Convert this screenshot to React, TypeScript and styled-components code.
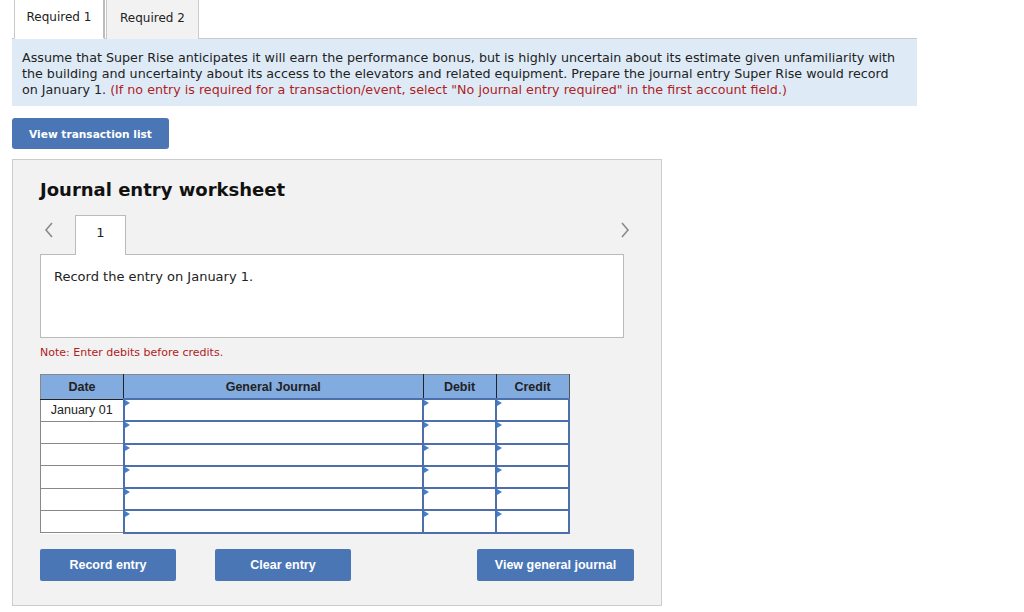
import { styled, createGlobalStyle } from 'styled-components';

const GlobalStyle = createGlobalStyle`
  html, body {
    margin: 0;
    padding: 0;
    background: #ffffff;
  }
  body {
    font-family: Verdana, "DejaVu Sans", sans-serif;
    color: #222;
  }
`;

const rows = ['January 01', '', '', '', '', ''];

const Chevron = ({ dir }: { dir: 'left' | 'right' }) => (
  <svg width="10" height="16" viewBox="0 0 10 16">
    <path
      d={dir === 'left' ? 'M8 1 L2 8 L8 15' : 'M2 1 L8 8 L2 15'}
      fill="none"
      stroke="#8a8a8a"
      strokeWidth="1.6"
    />
  </svg>
);

const App = () => {
  return (
    <Page>
      <GlobalStyle />
      <TabBar>
        <Tab $active>Required 1</Tab>
        <Tab>Required 2</Tab>
      </TabBar>

      <Question>
        Assume that Super Rise anticipates it will earn the performance bonus, but is highly uncertain about its estimate given
        unfamiliarity with the building and uncertainty about its access to the elevators and related equipment. Prepare the
        journal entry Super Rise would record on January 1.{' '}
        <span className="hint">
          (If no entry is required for a transaction/event, select "No journal entry required" in the first account field.)
        </span>
      </Question>

      <TransactionButton>View transaction list</TransactionButton>

      <Worksheet>
        <h2>Journal entry worksheet</h2>

        <EntryNav>
          <NavArrow>
            <Chevron dir="left" />
          </NavArrow>
          <EntryTab>1</EntryTab>
          <div className="spacer" />
          <NavArrow $right>
            <Chevron dir="right" />
          </NavArrow>
        </EntryNav>

        <EntryBox>Record the entry on January 1.</EntryBox>

        <Note>Note: Enter debits before credits.</Note>

        <JournalTable>
          <thead>
            <tr>
              <th style={{ width: 82 }}>Date</th>
              <th>General Journal</th>
              <th style={{ width: 72 }}>Debit</th>
              <th style={{ width: 72 }}>Credit</th>
            </tr>
          </thead>
          <tbody>
            {rows.map((date, i) => (
              <tr key={i}>
                <DateCell>{date}</DateCell>
                <InputCell />
                <InputCell />
                <InputCell />
              </tr>
            ))}
          </tbody>
        </JournalTable>

        <ButtonRow>
          <ActionButton $width={136}>Record entry</ActionButton>
          <ActionButton $width={136}>Clear entry</ActionButton>
          <div className="spacer" />
          <ActionButton $width={157} $pushRight>
            View general journal
          </ActionButton>
        </ButtonRow>
      </Worksheet>
    </Page>
  );
};

const Page = styled.div`
  padding: 0 0 0 12px;
  width: 905px;
`;

const TabBar = styled.div`
  display: flex;
  height: 38px;
  padding-left: 2px;
  border-bottom: 1px solid #c8c8c8;
`;

const Tab = styled.div<{ $active?: boolean }>`
  display: flex;
  align-items: center;
  justify-content: center;
  width: ${({ $active }) => ($active ? '91px' : '93px')};
  height: 39px;
  box-sizing: border-box;
  font-size: 12px;
  color: #222;
  background: ${({ $active }) => ($active ? '#ffffff' : '#f2f2f2')};
  border-left: 1px solid #c8c8c8;
  border-right: ${({ $active }) => ($active ? '2px solid #bdbdbd' : '1px solid #cccccc')};
  border-bottom: ${({ $active }) => ($active ? '1px solid #fff' : 'none')};
  margin-left: ${({ $active }) => ($active ? '0' : '1px')};
  padding-bottom: 4px;
`;

const Question = styled.div`
  background: #deebf7;
  padding: 11px 14px 8px 10px;
  font-size: 12.7px;
  line-height: 16px;
  color: #222;

  .hint {
    color: #b0211d;
  }
`;

const TransactionButton = styled.button`
  display: block;
  margin-top: 12px;
  width: 157px;
  height: 31px;
  border: none;
  border-radius: 3px;
  background: #4a76b6;
  color: #fff;
  font-family: Verdana, "DejaVu Sans", sans-serif;
  font-size: 10.6px;
  font-weight: bold;
`;

const Worksheet = styled.div`
  margin-top: 10px;
  width: 650px;
  box-sizing: border-box;
  border: 1px solid #cccccc;
  background: #f2f2f2;
  padding: 18px 37px 24px 27px;

  h2 {
    margin: 0;
    font-size: 18px;
    line-height: 24px;
    font-weight: bold;
    color: #111;
  }
`;

const EntryNav = styled.div`
  display: flex;
  align-items: flex-end;
  margin-top: 13px;
  height: 39px;

  .spacer {
    flex: 1;
  }
`;

const NavArrow = styled.div<{ $right?: boolean }>`
  align-self: flex-start;
  width: 35px;
  height: 30px;
  display: flex;
  align-items: center;
  justify-content: ${({ $right }) => ($right ? 'flex-end' : 'flex-start')};
  padding-left: ${({ $right }) => ($right ? '0' : '4px')};
  margin-right: ${({ $right }) => ($right ? '-6px' : '0')};
  box-sizing: border-box;
`;

const EntryTab = styled.div`
  width: 51px;
  height: 40px;
  box-sizing: border-box;
  background: #fff;
  border: 1px solid #bbbbbb;
  border-bottom: none;
  display: flex;
  justify-content: center;
  padding-top: 9px;
  font-size: 13px;
  margin-bottom: -1px;
  position: relative;
  z-index: 1;
`;

const EntryBox = styled.div`
  height: 84px;
  box-sizing: border-box;
  background: #fff;
  border: 1px solid #bbbbbb;
  padding: 14px 13px;
  font-size: 13px;
  line-height: 16px;
`;

const Note = styled.div`
  margin-top: 8px;
  font-size: 11px;
  color: #b0211d;
`;

const JournalTable = styled.table`
  margin-top: 15px;
  width: 530px;
  border-collapse: collapse;
  background: #fff;
  font-family: "Liberation Sans", Arial, sans-serif;
  font-size: 12.5px;

  th {
    background: #82abe0;
    height: 23px;
    padding: 0;
    border: 1px solid #222;
    border-top: 1px solid #888;
    font-weight: bold;
    color: #222;
  }
  th:first-child {
    border-left: 1px solid #888;
  }
  th:last-child {
    border-right: 1px solid #555;
  }
  td {
    height: 22.3px;
    padding: 0;
  }
`;

const DateCell = styled.td`
  box-sizing: border-box;
  border: 1px solid #888888;
  text-align: center;
  color: #222;
`;

const InputCell = styled.td`
  position: relative;
  box-sizing: border-box;
  border: 2px solid #4d70ac;

  &::before {
    content: '';
    position: absolute;
    top: 0;
    left: 0;
    border-top: 3px solid transparent;
    border-bottom: 3px solid transparent;
    border-left: 5px solid #3f7fd0;
  }
`;

const ButtonRow = styled.div`
  display: flex;
  gap: 39px;
  margin-top: 15px;

  .spacer {
    flex: 1;
  }
`;

const ActionButton = styled.button<{ $width: number; $pushRight?: boolean }>`
  width: ${({ $width }) => $width}px;
  height: 32px;
  margin-right: ${({ $pushRight }) => ($pushRight ? '-10px' : '0')};
  border: none;
  border-radius: 2px;
  background: #4a76b6;
  color: #fff;
  font-family: "Liberation Sans", Arial, sans-serif;
  font-size: 12.5px;
  font-weight: bold;
`;

export default App;
